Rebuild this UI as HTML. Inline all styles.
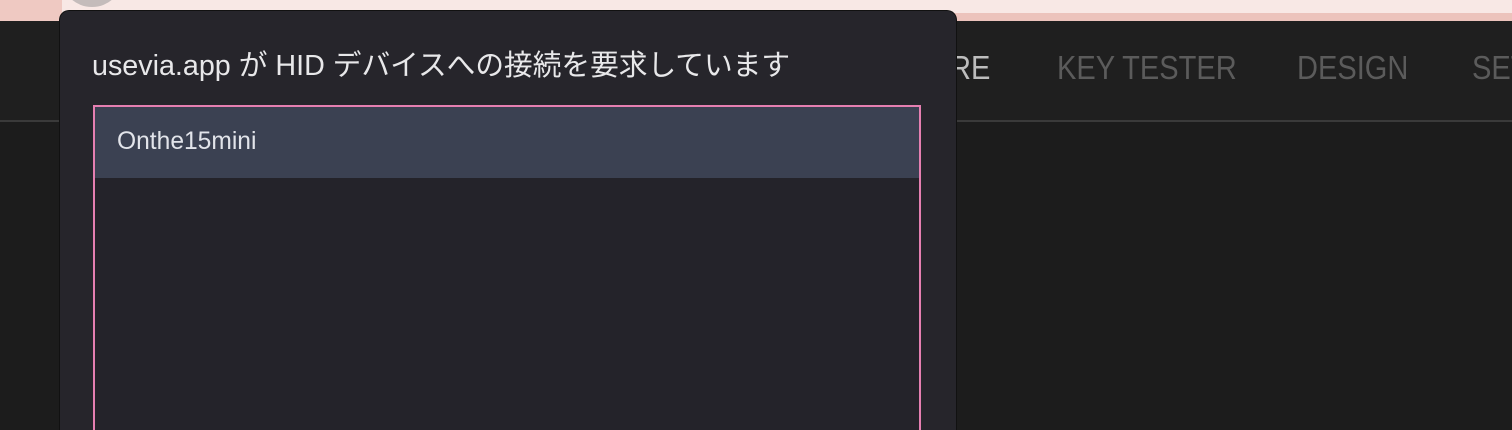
<!DOCTYPE html>
<html><head><meta charset="utf-8"><style>
html,body{margin:0;width:1512px;height:430px;overflow:hidden}
body{background:#1c1c1c;position:relative;font-family:"Liberation Sans","Noto Sans CJK JP",sans-serif}
.top{position:absolute;left:0;top:0;width:1512px;height:13px;background:#f8e8e5}
.top2{position:absolute;left:0;top:13px;width:1512px;height:8px;background:#ecc3bc}
.lefttop{position:absolute;left:0;top:0;width:62px;height:21px;background:#efc9c2}
.circ{position:absolute;left:62px;top:-50px;width:60px;height:57px;border-radius:50%;background:#c4bcbb}
.nav{position:absolute;left:0;top:21px;width:1512px;height:99px;background:#1f1f1f;overflow:hidden}
.line{position:absolute;left:0;top:120px;width:1512px;height:2px;background:#3a3a3a}
.nav span{position:absolute;top:28px;font-size:33px;color:#5b5b5b;transform:scaleX(.88);transform-origin:left;font-family:"Liberation Sans Narrow","Liberation Sans",sans-serif}
.dlg{position:absolute;left:60px;top:11px;width:896px;height:419px;background:#26252b;border-radius:9px 9px 0 0;box-shadow:0 0 0 1px #111}
.title{position:absolute;left:32px;top:38px;font-size:28.7px;line-height:34px;color:#e8e8ea;white-space:nowrap}
.list{position:absolute;left:33px;top:94px;width:824px;height:330px;border:2px solid #e57fb1;border-bottom:none;background:#24232a}
.row{height:71px;background:#3b4152;color:#e2e4ea;font-size:24.6px;line-height:70px;padding-left:22px}
</style></head><body>
<div class="top"></div><div class="top2"></div><div class="lefttop"></div>
<div class="nav">
<span style="left:950px;color:#bdbdbd">RE</span>
<span style="left:1057px">KEY TESTER</span>
<span style="left:1297px">DESIGN</span>
<span style="left:1472px">SET</span>
</div>
<div class="line"></div>
<div class="circ"></div>
<div class="dlg">
<div class="title">usevia.app が HID デバイスへの接続を要求しています</div>
<div class="list"><div class="row">Onthe15mini</div></div>
</div>
</body></html>
